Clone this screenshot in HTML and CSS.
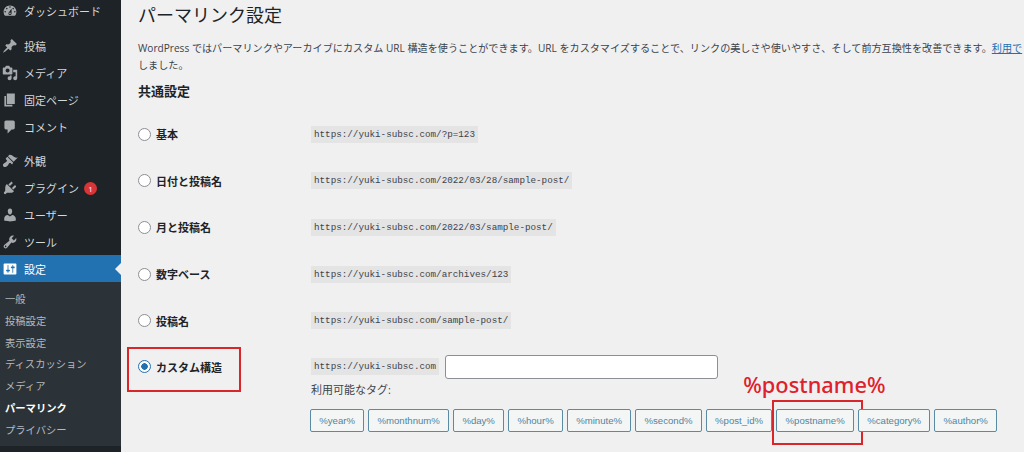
FILE: index.html
```html
<!DOCTYPE html>
<html lang="ja">
<head>
	<meta charset="utf-8">
	<title>パーマリンク設定</title>
	<link rel="stylesheet" href="styles.css">
</head>
<body>
	<aside class="sidebar">
		<ul class="menu">
			<li class="menu-item group-end">
				<svg class="icon" viewBox="0 0 20 20"><path d="M3.76 16h12.48c1.1-1.37 1.76-3.11 1.76-5 0-4.42-3.58-8-8-8s-8 3.58-8 8c0 1.89.66 3.63 1.76 5zM10 4c.55 0 1 .45 1 1s-.45 1-1 1-1-.45-1-1 .45-1 1-1zM6 6c.55 0 1 .45 1 1s-.45 1-1 1-1-.45-1-1 .45-1 1-1zm8 0c.55 0 1 .45 1 1s-.45 1-1 1-1-.45-1-1 .45-1 1-1zm-5.37 5.55L12 7v6c0 1.1-.9 2-2 2s-2-.9-2-2c0-.57.24-1.08.63-1.45zM4 10c.55 0 1 .45 1 1s-.45 1-1 1-1-.45-1-1 .45-1 1-1zm12 0c.55 0 1 .45 1 1s-.45 1-1 1-1-.45-1-1 .45-1 1-1zm-5 3c0-.55-.45-1-1-1s-1 .45-1 1 .45 1 1 1 1-.45 1-1z"/></svg>
				ダッシュボード
			</li>
			<li class="menu-item">
				<svg class="icon" viewBox="0 0 20 20"><path d="M10.44 3.02l1.82-1.82 6.36 6.35-1.83 1.82c-1.05-.68-2.48-.57-3.41.36l-.75.75c-.92.93-1.04 2.35-.35 3.41l-1.83 1.82-2.41-2.41-2.8 2.79c-.42.42-3.38 2.71-3.8 2.29s1.86-3.39 2.28-3.81l2.79-2.79L4.1 9.36l1.83-1.82c1.05.69 2.48.57 3.4-.36l.75-.75c.93-.92 1.05-2.35.36-3.41z"/></svg>
				投稿
			</li>
			<li class="menu-item">
				<svg class="icon" viewBox="0 0 20 20"><path d="M13 11V4c0-.55-.45-1-1-1h-1.67L9 1H5L3.67 3H2c-.55 0-1 .45-1 1v7c0 .55.45 1 1 1h10c.55 0 1-.45 1-1zM7 4.5c1.38 0 2.5 1.12 2.5 2.5S8.38 9.5 7 9.5 4.5 8.38 4.5 7 5.62 4.5 7 4.5zM14 6h5v10.5c0 1.38-1.12 2.5-2.5 2.5S14 17.88 14 16.5s1.12-2.5 2.5-2.5c.17 0 .34.02.5.05V9h-3V6zm-4 8.05V13h2v3.5c0 1.38-1.12 2.5-2.5 2.5S7 17.88 7 16.5 8.12 14 9.5 14c.17 0 .34.02.5.05z"/></svg>
				メディア
			</li>
			<li class="menu-item">
				<svg class="icon" viewBox="0 0 20 20"><path d="M6 15V2h10v13H6zm-1 1h8v2H3V5h2v11z"/></svg>
				固定ページ
			</li>
			<li class="menu-item group-end">
				<svg class="icon" viewBox="0 0 20 20"><path d="M5 2h9c1.1 0 2 .9 2 2v7c0 1.1-.9 2-2 2h-2l-5 5v-5H5c-1.1 0-2-.9-2-2V4c0-1.1.9-2 2-2z"/></svg>
				コメント
			</li>
			<li class="menu-item">
				<svg class="icon" viewBox="0 0 20 20"><path d="M14.48 11.06L7.41 3.99l1.5-1.5c.5-.56 2.3-.47 3.51.32 1.21.8 1.43 1.28 2.91 2.1 1.18.64 2.45 1.26 4.45.85zm-.71.71L6.7 4.7 4.93 6.47c-.39.39-.39 1.02 0 1.41l1.06 1.06c.39.39.39 1.03 0 1.42-.6.6-1.43 1.11-2.21 1.69-.35.26-.7.53-1.01.84C1.43 13.23.4 15.54 1.8 16.94c1.39 1.4 3.71.38 5.03-1.07.31-.31.58-.66.84-1.01.58-.78 1.09-1.61 1.69-2.21.39-.39 1.02-.39 1.41 0l1.06 1.06c.39.39 1.02.39 1.41 0z"/></svg>
				外観
			</li>
			<li class="menu-item">
				<svg class="icon" viewBox="0 0 20 20"><path d="M13.11 4.36L9.87 7.6 8 5.73l3.24-3.24c.35-.34 1.05-.2 1.56.32.52.51.66 1.21.31 1.55zm-8 1.77l.91-1.12 9.01 9.01-1.19.84c-.71.71-2.63 1.16-3.82 1.16H6.14L4.9 17.26c-.59.59-1.54.59-2.12 0-.59-.58-.59-1.53 0-2.12l1.24-1.24v-3.88c0-1.13.4-3.19 1.09-3.89zm7.26 3.97l3.24-3.24c.34-.35 1.04-.21 1.55.31.52.51.66 1.21.31 1.55l-3.24 3.25z"/></svg>
				プラグイン
				<span class="badge">1</span>
			</li>
			<li class="menu-item">
				<svg class="icon" viewBox="0 0 20 20"><path d="M10 9.25c-2.27 0-2.73-3.44-2.73-3.44C7 4.02 7.82 2 9.97 2c2.16 0 2.98 2.02 2.71 3.81 0 0-.41 3.44-2.68 3.44zm0 2.57L12.72 10c2.39 0 4.52 2.33 4.52 4.53v2.49s-3.65 1.13-7.24 1.13c-3.65 0-7.24-1.13-7.24-1.13v-2.49c0-2.25 1.94-4.48 4.47-4.48z"/></svg>
				ユーザー
			</li>
			<li class="menu-item">
				<svg class="icon" viewBox="0 0 20 20"><path d="M16.68 9.77c-1.34 1.34-3.3 1.67-4.95.99l-5.41 6.52c-.99.99-2.59.99-3.58 0s-.99-2.59 0-3.57l6.52-5.42c-.68-1.65-.35-3.61.99-4.95 1.28-1.28 3.12-1.62 4.72-1.06l-2.89 2.89 2.82 2.82 2.86-2.87c.53 1.58.18 3.39-1.08 4.65zM3.81 16.21c.4.39 1.04.39 1.43 0 .4-.4.4-1.04 0-1.43-.39-.4-1.03-.4-1.43 0-.39.39-.39 1.03 0 1.43z"/></svg>
				ツール
			</li>
			<li class="menu-item active">
				<svg class="icon" viewBox="0 0 20 20"><path d="M18 16V4c0-.55-.45-1-1-1H3c-.55 0-1 .45-1 1v12c0 .55.45 1 1 1h14c.55 0 1-.45 1-1zM8 11h1c.55 0 1 .45 1 1s-.45 1-1 1H8v1.5c0 .28-.22.5-.5.5s-.5-.22-.5-.5V13H6c-.55 0-1-.45-1-1s.45-1 1-1h1V5.5c0-.28.22-.5.5-.5s.5.22.5.5V11zm5-2h-1c-.55 0-1-.45-1-1s.45-1 1-1h1V5.5c0-.28.22-.5.5-.5s.5.22.5.5V7h1c.55 0 1 .45 1 1s-.45 1-1 1h-1v5.5c0 .28-.22.5-.5.5s-.5-.22-.5-.5V9z"/></svg>
				設定
			</li>
		</ul>
		<ul class="submenu">
			<li>一般</li>
			<li>投稿設定</li>
			<li>表示設定</li>
			<li>ディスカッション</li>
			<li>メディア</li>
			<li class="current">パーマリンク</li>
			<li>プライバシー</li>
		</ul>
	</aside>

	<main class="content">
		<h1>パーマリンク設定</h1>
		<p class="intro">WordPress ではパーマリンクやアーカイブにカスタム URL 構造を使うことができます。URL をカスタマイズすることで、リンクの美しさや使いやすさ、そして前方互換性を改善できます。<a href="#">利用で</a><br>しました。</p>
		<h2>共通設定</h2>

		<div class="option">
			<label class="choice"><span class="radio"></span>基本</label>
			<code>https://yuki-subsc.com/?p=123</code>
		</div>
		<div class="option">
			<label class="choice"><span class="radio"></span>日付と投稿名</label>
			<code>https://yuki-subsc.com/2022/03/28/sample-post/</code>
		</div>
		<div class="option">
			<label class="choice"><span class="radio"></span>月と投稿名</label>
			<code>https://yuki-subsc.com/2022/03/sample-post/</code>
		</div>
		<div class="option">
			<label class="choice"><span class="radio"></span>数字ベース</label>
			<code>https://yuki-subsc.com/archives/123</code>
		</div>
		<div class="option">
			<label class="choice"><span class="radio"></span>投稿名</label>
			<code>https://yuki-subsc.com/sample-post/</code>
		</div>
		<div class="option custom">
			<label class="choice"><span class="radio checked"></span>カスタム構造</label>
			<div class="custom-fields">
				<div class="custom-url">
					<code>https://yuki-subsc.com</code>
					<input type="text" class="url-input">
				</div>
				<p class="tags-label">利用可能なタグ:</p>
				<div class="tags">
					<button>%year%</button>
					<button>%monthnum%</button>
					<button>%day%</button>
					<button>%hour%</button>
					<button>%minute%</button>
					<button>%second%</button>
					<button>%post_id%</button>
					<button class="marked">%postname%<span class="note">%postname%</span></button>
					<button>%category%</button>
					<button>%author%</button>
				</div>
			</div>
		</div>
	</main>
</body>
</html>
```

FILE: styles.css
```css
* {
	box-sizing: border-box;
}
html, body {
	height: 100%;
}
body {
	display: flex;
	margin: 0;
	overflow: hidden;
	background-color: #f0f0f1;
	color: #3c434a;
	font-family: "Open Sans", "Noto Sans CJK JP", sans-serif;
	font-size: 11px;
}
ul {
	list-style: none;
	margin: 0;
	padding: 0;
}

/* sidebar */
.sidebar {
	flex: 0 0 121px;
	background-color: #1d2327;
	color: #d5d7d9;
}
.menu {
	margin-top: -2px;
}
.menu-item {
	position: relative;
	display: flex;
	align-items: center;
	height: 26.8px;
	padding-left: 2px;
	white-space: nowrap;
}
.group-end {
	margin-bottom: 8px;
}
.icon {
	flex: none;
	width: 16px;
	height: 16px;
	margin-right: 6px;
	fill: #a7aaad;
}
.badge {
	width: 13px;
	height: 13px;
	margin-left: 5px;
	border-radius: 50%;
	background-color: #d63638;
	color: #fff;
	font-size: 8px;
	line-height: 13px;
	text-align: center;
}
.menu-item.active {
	background-color: #2271b1;
	color: #fff;
}
.active .icon {
	fill: #fff;
}
.active::after {
	content: "";
	position: absolute;
	right: 0;
	top: 50%;
	margin-top: -6px;
	border: 6px solid transparent;
	border-right-color: #f0f0f1;
}
.submenu {
	height: 164px;
	padding-top: 7px;
	background-color: #2c3338;
	color: #b4b9be;
	font-size: 10.3px;
}
.submenu li {
	height: 21.8px;
	padding-left: 5px;
	line-height: 21.8px;
	white-space: nowrap;
}
.submenu .current {
	color: #fff;
	font-weight: 700;
}

/* main area */
.content {
	flex: 1;
	min-width: 0;
	padding-left: 17px;
	overflow: hidden;
}
h1 {
	margin: 2px 0 0;
	color: #1d2327;
	font-size: 18px;
	font-weight: 400;
	line-height: 26px;
}
.intro {
	margin: 12px 0 0;
	font-size: 10.12px;
	line-height: 17px;
	white-space: nowrap;
}
.intro a {
	color: #2271b1;
}
h2 {
	margin: 8px 0 0;
	color: #1d2327;
	font-size: 13px;
	font-weight: 700;
	line-height: 18px;
}
.option {
	display: flex;
	align-items: center;
	height: 46.6px;
}
.option:first-of-type {
	margin-top: 11px;
}
.choice {
	display: flex;
	flex: 0 0 173px;
	align-items: center;
	color: #1d2327;
	font-weight: 700;
}
.radio {
	flex: none;
	width: 13px;
	height: 13px;
	margin-right: 5px;
	border: 1px solid #8c8f94;
	border-radius: 50%;
	background-color: #fff;
}
.radio.checked {
	border-color: #2271b1;
	background: radial-gradient(circle, #2271b1 0 3px, #fff 3.5px);
}
code {
	flex: none;
	padding: 3px;
	background-color: #e4e4e5;
	font-family: "Liberation Mono", monospace;
	font-size: 9.25px;
	line-height: 11px;
}

/* custom structure row */
.custom {
	align-items: flex-start;
	height: auto;
	margin-top: 11px;
}
.custom .choice {
	position: relative;
	align-self: flex-start;
	height: 24px;
}
.custom .choice::before {
	content: "";
	position: absolute;
	left: -11px;
	top: -8px;
	width: 110px;
	height: 41px;
	border: 2px solid #d8262b;
}
.custom-url {
	display: flex;
	align-items: center;
	gap: 6px;
	height: 24px;
}
.url-input {
	width: 273px;
	height: 24px;
	padding: 0 5px;
	border: 1px solid #8c8f94;
	border-radius: 3px;
	background-color: #fff;
}
.tags-label {
	margin: 3px 0 0;
	line-height: 16px;
}
.tags {
	display: flex;
	gap: 4px;
	margin: 11px 0 0 -1px;
}
.tags button {
	position: relative;
	height: 23px;
	padding: 0 8.25px;
	border: 1px solid #5b8ba3;
	border-radius: 2px;
	background-color: #f4f5f5;
	color: #4f85a0;
	font-family: "Liberation Sans", sans-serif;
	font-size: 9.6px;
	white-space: nowrap;
}
.tags .marked::before {
	content: "";
	position: absolute;
	left: -5px;
	top: -10px;
	width: 87px;
	height: 41px;
	border: 2px solid #d8262b;
}
.note {
	position: absolute;
	left: -34px;
	top: -37px;
	color: #e0202a;
	font-family: "Noto Sans", sans-serif;
	font-size: 21.8px;
	font-weight: 500;
	line-height: 24px;
}
```
